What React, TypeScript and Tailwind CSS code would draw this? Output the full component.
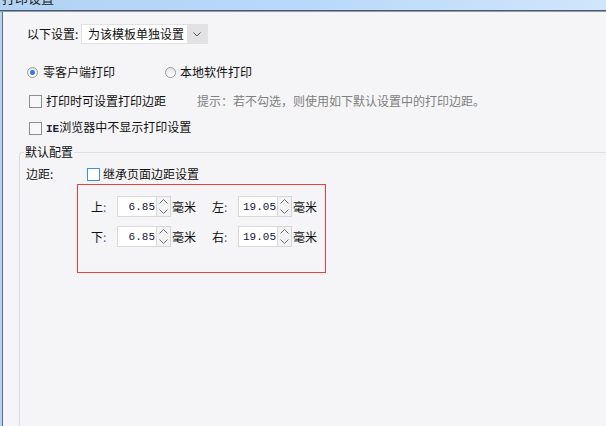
import React from "react";

const Radio = ({ checked }: { checked?: boolean }) => (
  <span className="flex h-[11px] w-[11px] items-center justify-center rounded-full border border-[#9a9a9a] bg-linear-to-b from-[#e6e6e6] to-[#ffffff]">
    {checked && <span className="h-[5px] w-[5px] rounded-full bg-[#2b7de9]" />}
  </span>
);

const Check = ({ blue }: { blue?: boolean }) => (
  <span
    className={
      blue
        ? "block h-[13px] w-[13px] border border-[#3d8fe6] bg-white"
        : "block h-[13px] w-[13px] border border-[#8c8c8c] bg-[#f7f7f9]"
    }
  />
);

const Spinner = () => (
  <span className="flex h-[21px] w-[14px] flex-col border border-l-0 border-[#d6d6d6] bg-[#f3f3f5]">
    <span className="flex flex-1 items-center justify-center">
      <svg width="9" height="5" viewBox="0 0 9 5">
        <path d="M0.5 4.5 L4.5 0.5 L8.5 4.5" fill="none" stroke="#6f6f6f" strokeWidth="1" />
      </svg>
    </span>
    <span className="flex flex-1 items-center justify-center">
      <svg width="9" height="5" viewBox="0 0 9 5">
        <path d="M0.5 0.5 L4.5 4.5 L8.5 0.5" fill="none" stroke="#6f6f6f" strokeWidth="1" />
      </svg>
    </span>
  </span>
);

const MarginField = ({ label, value, last }: { label: string; value: string; last?: boolean }) => (
  <div className={last ? "flex items-center" : "mr-[16px] flex items-center"}>
    <span className="w-[26px] text-[#111]">
      {label}
      <span className="text-[#5b5ba6]">:</span>
    </span>
    <span className="flex h-[21px] w-[40px] items-center justify-end border border-[#dadada] bg-white pr-[1px] font-['Liberation_Mono',monospace] text-[11px] text-[#14143c]">
      {value}
    </span>
    <Spinner />
    <span className="ml-[1px] text-[#111]">毫米</span>
  </div>
);

const App = () => {
  return (
    <div className="flex h-[426px] w-[606px] flex-col overflow-hidden bg-[#f5f5f7] font-['Noto_Sans_CJK_SC',sans-serif] text-[12px] leading-[16px] text-[#111]">
      <div className="h-[10px] overflow-hidden bg-linear-to-r from-[#b3d3f3] via-[#b8d9f9] to-[#d1e5fb] pl-[2px]">
        <span className="block -translate-y-[9px] text-[13px] leading-[13px] text-[#1a1a1a]">打印设置</span>
      </div>
      <div className="h-[1px] bg-[#4b5b6e]" />
      <div className="h-[1px] bg-[#8d9cb0]" />

      <div className="flex flex-1">
        <div className="w-[3px] border-r border-[#5d7089] bg-[#b9d3ee]" />
        <div className="flex flex-1 flex-col">
          <div className="ml-[24px] mt-[12px] flex h-[20px] items-center">
            <span className="w-[54px]">以下设置:</span>
            <div className="flex h-[20px] border border-[#e2e2e4]">
              <span className="flex w-[105px] items-center bg-white pl-[6px]">为该模板单独设置</span>
              <span className="flex w-[20px] items-center justify-center bg-[#e2e2e4]">
                <svg width="8" height="5" viewBox="0 0 8 5">
                  <path d="M0.5 0.5 L4 4 L7.5 0.5" fill="none" stroke="#555" strokeWidth="1" />
                </svg>
              </span>
            </div>
          </div>

          <div className="ml-[24px] mt-[18px] flex h-[20px] items-center">
            <Radio checked />
            <span className="ml-[5px] w-[122px]">零客户端打印</span>
            <Radio />
            <span className="ml-[4px]">本地软件打印</span>
          </div>

          <div className="ml-[26px] mt-[9px] flex h-[20px] items-center">
            <Check />
            <span className="ml-[4px] w-[151px]">打印时可设置打印边距</span>
            <span className="text-[#808080]">提示：若不勾选，则使用如下默认设置中的打印边距。</span>
          </div>

          <div className="ml-[26px] mt-[7px] flex h-[20px] items-center">
            <Check />
            <span className="ml-[4px]">
              <span className="font-['Liberation_Mono',monospace] text-[11px] font-bold text-[#202040]">IE</span>
              浏览器中不显示打印设置
            </span>
          </div>

          <fieldset className="ml-[16px] mt-[6px] min-w-0 flex-1 rounded-tl-[3px] border-l border-t border-[#dedee2]">
            <legend className="ml-[4px] px-[1px] leading-[16px]">默认配置</legend>
            <div className="mt-[4px] flex h-[20px] items-center pl-[6px]">
              <span className="w-[61px] text-[#1a1a1a]">边距:</span>
              <Check blue />
              <span className="ml-[3px]">继承页面边距设置</span>
            </div>
            <div className="ml-[57px] flex h-[89px] w-[249px] flex-col gap-[9px] border border-[#e8403f] pl-[13px] pt-[11px]">
              <div className="flex">
                <MarginField label="上" value="6.85" />
                <MarginField label="左" value="19.05" last />
              </div>
              <div className="flex">
                <MarginField label="下" value="6.85" />
                <MarginField label="右" value="19.05" last />
              </div>
            </div>
          </fieldset>
        </div>
      </div>
    </div>
  );
};

export default App;
